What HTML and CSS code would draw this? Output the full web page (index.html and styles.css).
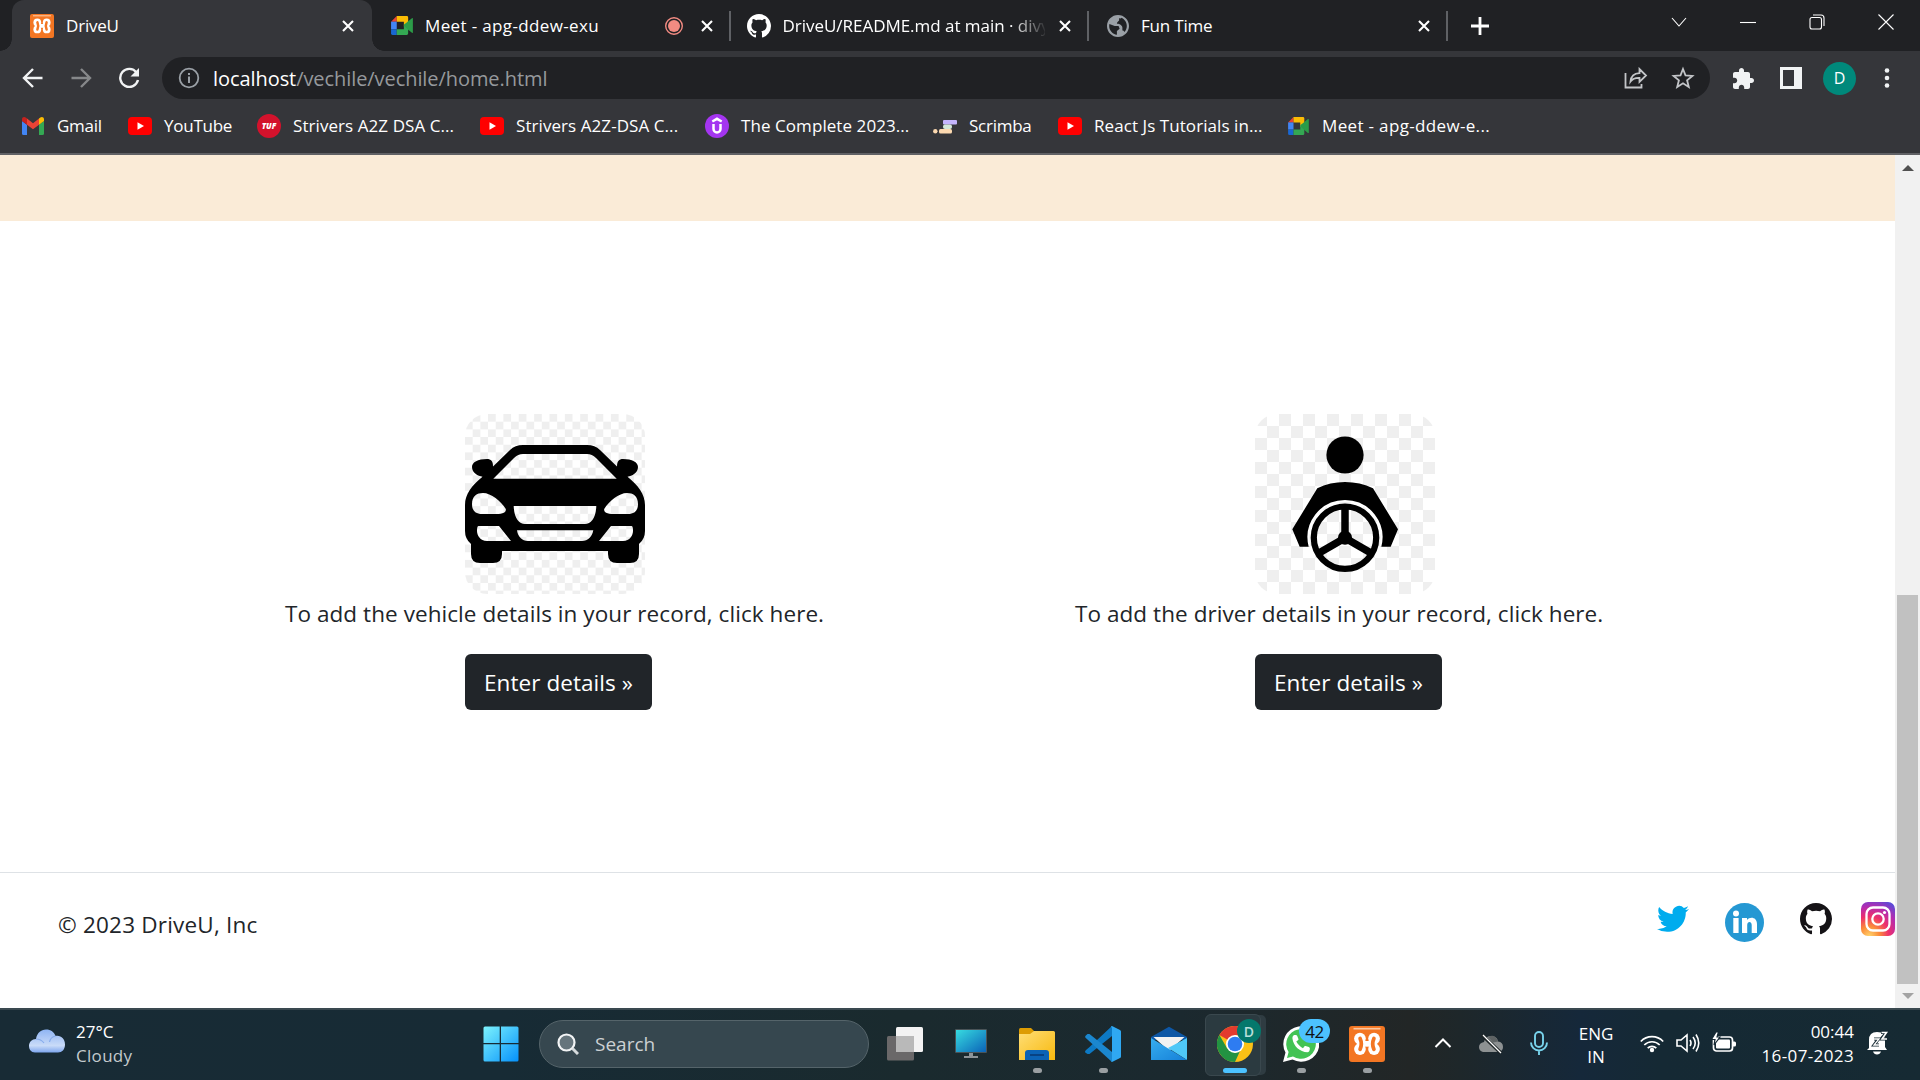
FILE: index.html
```html
<!DOCTYPE html>
<html lang="en">
<head>
<meta charset="utf-8">
<title>DriveU</title>
<link rel="stylesheet" href="styles.css">
</head>
<body>
<svg class="defs" width="0" height="0" aria-hidden="true">
  <defs>
    <linearGradient id="g-win" x1="0" y1="0" x2="1" y2="1"><stop offset="0" stop-color="#7df3fd"/><stop offset="1" stop-color="#0591fb"/></linearGradient>
    <linearGradient id="g-mon" x1="0" y1="0" x2="1" y2="1"><stop offset="0" stop-color="#36dbe0"/><stop offset="1" stop-color="#0b63b8"/></linearGradient>
    <linearGradient id="g-fold" x1="0" y1="0" x2="1" y2="1"><stop offset="0" stop-color="#ffde76"/><stop offset="1" stop-color="#f8b90e"/></linearGradient>
    <linearGradient id="g-cloud" x1="0" y1="0" x2="0" y2="1"><stop offset="0" stop-color="#8fb4f3"/><stop offset=".7" stop-color="#c9dbf8"/><stop offset="1" stop-color="#7ea6ee"/></linearGradient>
    <linearGradient id="g-mail" x1="0" y1="0" x2="1" y2="1"><stop offset="0" stop-color="#37aef0"/><stop offset="1" stop-color="#1580d8"/></linearGradient>
    <radialGradient id="g-ig" cx=".25" cy="1" r="1.15"><stop offset="0" stop-color="#ffd36b"/><stop offset=".25" stop-color="#fb8c3a"/><stop offset=".5" stop-color="#ee2f6b"/><stop offset=".75" stop-color="#b42cb0"/><stop offset="1" stop-color="#5a4bd8"/></radialGradient>
    <pattern id="p-car" width="15.36" height="15.36" patternUnits="userSpaceOnUse"><path fill="#efefef" d="M0 7.68h7.68v7.68H0zM7.68 0h7.68v7.68H7.68z"/></pattern>
    <pattern id="p-drv" width="24" height="24" patternUnits="userSpaceOnUse"><path fill="#efefef" d="M0 0h12v12H0zM12 12h12v12H12z"/></pattern>
  </defs>
  <symbol id="close" viewBox="0 0 16 16"><path d="M3 3l10 10M13 3L3 13" stroke="#fff" stroke-width="2.1" fill="none"/></symbol>
  <symbol id="xampp" viewBox="0 0 24 24"><rect width="24" height="24" rx="2" fill="#f37623"/><path d="M3 1.800h18" stroke="#fbc8a2" stroke-width="1.100"/><g fill="#fff"><circle cx="7.300" cy="8.400" r="3.900"/><circle cx="16.700" cy="8.400" r="3.900"/><circle cx="7.300" cy="15.400" r="3.900"/><circle cx="16.700" cy="15.400" r="3.900"/><path d="M5.200 10h13.600v3.800H5.200z"/></g><path d="M7.400 8.300q1.600 3.600 0 7.200M16.600 8.300q-1.600 3.600 0 7.200" fill="none" stroke="#f37623" stroke-width="2.500" stroke-linecap="round"/></symbol>
  <symbol id="meet" viewBox="0 0 24 20"><path fill="#ea4335" d="M1 6l6-6v6z"/><path fill="#fbbc04" d="M7 0h10.500q1.500 0 1.500 1.500V8l-4.500 3V6H7z"/><path fill="#4285f4" d="M1 6h6v8H1z"/><path fill="#1967d2" d="M1 14h6v6H2.500Q1 20 1 18.500z"/><path fill="#34a853" d="M7 14h7.500V9L19 6v12.500q0 1.500-1.500 1.500H7z"/><path fill="#2c9c48" d="M14.500 10L19 5.500l4-3.200q1-.6 1 .5v14.400q0 1.100-1 .5l-4-3.200z"/></symbol>
  <symbol id="github" viewBox="0 0 16 16"><path fill="currentColor" d="M8 0C3.58 0 0 3.58 0 8c0 3.540 2.290 6.530 5.470 7.590.4.070.55-.17.55-.38 0-.19-.01-.82-.01-1.490-2.010.37-2.530-.49-2.690-.94-.09-.23-.48-.94-.82-1.130-.28-.15-.68-.52-.01-.53.63-.01 1.080.58 1.230.82.72 1.210 1.870.87 2.330.66.070-.52.28-.87.51-1.070-1.780-.2-3.640-.89-3.640-3.950 0-.87.31-1.590.82-2.150-.08-.2-.36-1.020.08-2.120 0 0 .67-.21 2.200.82.64-.18 1.320-.27 2-.27s1.360.09 2 .27c1.530-1.040 2.200-.82 2.200-.82.44 1.100.16 1.920.08 2.120.51.56.82 1.270.82 2.150 0 3.070-1.870 3.750-3.650 3.950.29.25.54.73.54 1.480 0 1.070-.01 1.930-.01 2.200 0 .21.15.46.55.38A8.010 8.010 0 0 0 16 8c0-4.420-3.580-8-8-8z"/></symbol>
  <symbol id="yt" viewBox="0 0 24 18"><rect width="24" height="18" rx="4" fill="#f00"/><path fill="#fff" d="M9.500 5.200v7.600L16 9z"/></symbol>
</svg>

<header class="chrome">
  <div class="tabstrip">
    <div class="tab active"><svg class="ic24"><use href="#xampp"/></svg><span class="title">DriveU</span><svg class="x"><use href="#close"/></svg></div>
    <div class="tab sep"><svg class="meet"><use href="#meet"/></svg><span class="title wide">Meet - apg-ddew-exu</span><svg class="rec" viewBox="0 0 20 20"><circle cx="10" cy="10" r="8.300" fill="none" stroke="#f28b82" stroke-width="1.400"/><circle cx="10" cy="10" r="6" fill="#f28b82"/></svg><svg class="x"><use href="#close"/></svg></div>
    <div class="tab sep gh"><svg class="ic24"><use href="#github"/></svg><span class="title fade">DriveU/README.md at main · divy</span><svg class="x"><use href="#close"/></svg></div>
    <div class="tab sep"><svg class="globe" viewBox="2 2 20 20"><path fill="#9aa0a6" d="M12 2C6.480 2 2 6.480 2 12s4.480 10 10 10 10-4.480 10-10S17.520 2 12 2zm-1 17.930c-3.950-.49-7-3.850-7-7.930 0-.62.08-1.210.21-1.790L9 12h3.500l1 2.500-2.500 2zm6.900-2.540c-.26-.81-1-1.390-1.900-1.390v-2.500c0-1.500-2-3.500-5-3.500 0-1.500 1-2 2-3V5c1 0 2 .6 2-.41 2.930 1.190 5 4.060 5 7.410 0 2.080-.8 3.970-2.100 5.390z"/></svg><span class="title">Fun Time</span><svg class="x"><use href="#close"/></svg></div>
    <svg class="plus" viewBox="0 0 18 18"><path d="M9 0v18M0 9h18" stroke="#fff" stroke-width="2.800"/></svg>
    <div class="winctl">
      <svg viewBox="0 0 16 16"><path d="M1 4l7 8 7-8"/></svg>
      <svg viewBox="0 0 16 16"><path d="M0 8.500h16"/></svg>
      <svg viewBox="0 0 16 16"><rect x="1" y="3.500" width="11.500" height="11.500" rx="2"/><path d="M4 1h8q3 0 3 3v8"/></svg>
      <svg viewBox="0 0 16 16"><path d="M.5.5l15 15M15.500.5l-15 15"/></svg>
    </div>
  </div>
  <div class="toolbar">
    <svg class="nav" viewBox="0 0 22 22"><path d="M20.500 11H3M11 2L2 11l9 9" stroke="#f1f3f4"/></svg>
    <svg class="nav" viewBox="0 0 22 22"><path d="M1.500 11H19M11 2l9 9-9 9" stroke="#86888a"/></svg>
    <svg class="nav" viewBox="0 0 22 22"><path d="M18.500 5.500A9 9 0 1 0 20 13" stroke="#f1f3f4"/><path d="M21 1v8.500h-8.500z" fill="#f1f3f4"/></svg>
    <div class="omni">
      <svg class="info" viewBox="0 0 22 22"><circle cx="11" cy="11" r="9.300" fill="none" stroke="#9aa0a6" stroke-width="1.800"/><path d="M11 9.500V16M11 6v2" stroke="#9aa0a6" stroke-width="2"/></svg>
      <span class="url"><b>localhost</b>/vechile/vechile/home.html</span>
      <svg class="share" viewBox="0 0 24 22"><path d="M1.500 6v14.500h16V17M6.500 14.500c.5-5 3.500-8 9-8.300V2l6.500 6.500-6.500 6.300v-4c-4-.2-7 .9-9 3.700z"/></svg>
      <svg class="star" viewBox="0 0 24 24"><path d="M12 3l2.500 6.400 6.900.5-5.300 4.400 1.700 6.700-5.800-3.700L6.200 21l1.700-6.700L2.600 9.900l6.900-.5z"/></svg>
    </div>
    <svg class="puz" viewBox="1 0 23 23"><path fill="#f1f3f4" d="M20.500 11H19V7c0-1.100-.9-2-2-2h-4V3.500C13 2.120 11.880 1 10.500 1S8 2.120 8 3.500V5H4c-1.100 0-1.990.9-1.990 2v3.800H3.500c1.490 0 2.700 1.210 2.700 2.700s-1.210 2.700-2.700 2.700H2V20c0 1.100.9 2 2 2h3.800v-1.500c0-1.490 1.210-2.700 2.700-2.700 1.490 0 2.700 1.210 2.700 2.700V22H17c1.100 0 2-.9 2-2v-4h1.500c1.380 0 2.500-1.120 2.500-2.500S21.880 11 20.500 11z"/></svg>
    <svg class="panel" viewBox="0 0 22 22"><path fill="#f1f3f4" fill-rule="evenodd" d="M0 0h22v22H0zM3 3v16h11V3z"/></svg>
    <div class="me">D</div>
    <svg class="dots" viewBox="0 0 6 20"><circle cx="3" cy="2.500" r="2.300"/><circle cx="3" cy="10" r="2.300"/><circle cx="3" cy="17.500" r="2.300"/></svg>
  </div>
  <nav class="bookmarks">
    <a><svg viewBox="0 0 24 18"><path fill="#4285f4" d="M1 4l5 3.700V18H2.500Q1 18 1 16.500z"/><path fill="#34a853" d="M18 7.700L23 4v12.500q0 1.500-1.500 1.500H18z"/><path fill="#ea4335" d="M6 1.500l6 4.700 6-4.700v6.200l-6 4.600-6-4.600z"/><path fill="#c5221f" d="M1 4V2.200C1 .2 3.200-.5 4.700.6L6 1.500v6.200z"/><path fill="#fbbc04" d="M18 1.500l1.300-.9C20.800-.5 23 .2 23 2.200V4l-5 3.700z"/></svg><span>Gmail</span></a>
    <a><svg><use href="#yt"/></svg><span>YouTube</span></a>
    <a class="mid"><svg class="round" viewBox="0 0 24 24"><circle cx="12" cy="12" r="12" fill="#d3122c"/><text class="tuf" x="12" y="15" text-anchor="middle">TUF</text></svg><span>Strivers A2Z DSA C...</span></a>
    <a class="mid"><svg><use href="#yt"/></svg><span>Strivers A2Z-DSA C...</span></a>
    <a class="mid"><svg class="round" viewBox="0 0 24 24"><circle cx="12" cy="12" r="12" fill="#a435f0"/><path d="M7.300 7.500L12 4.800l4.700 2.700M8.500 10v5a3.500 3.500 0 0 0 7 0v-5" fill="none" stroke="#fff" stroke-width="2.500"/></svg><span>The Complete 2023...</span></a>
    <a><svg class="round" viewBox="0 0 24 24"><rect x="10" y="6" width="14" height="4.500" rx="1" fill="#c4b5fd"/><rect x="10" y="10.500" width="9" height="4.500" rx="2" fill="#d3e8d8"/><rect x="6" y="15" width="13" height="4.500" rx="1.500" fill="#fcd9b0"/><circle cx="2.300" cy="17.300" r="2.200" fill="#fcd9b0"/></svg><span>Scrimba</span></a>
    <a class="mid"><svg><use href="#yt"/></svg><span>React Js Tutorials in...</span></a>
    <a class="wide"><svg class="meet"><use href="#meet"/></svg><span>Meet - apg-ddew-e...</span></a>
  </nav>
</header>

<div class="viewport">
  <main class="page">
    <div class="band"></div>
    <section class="cards">
      <article class="card">
        <svg class="pic" viewBox="0 0 180 180"><rect width="180" height="180" fill="#fff"/><rect width="180" height="180" fill="url(#p-car)"/>
          <path fill-rule="evenodd" d="M58 31H122Q130 31 135 36L152 52.500C152 47 154 45 158 45C167 45 173 48 173 53C173 59 167 62 162.500 62.700C173 71 180 80 180 91V117Q180 125 174 130V140Q174 149 165 149H152Q143 149 143 140V137H37V140Q37 149 28 149H15Q6 149 6 140V130Q0 125 0 117V91C0 80 7 71 17.500 62.700C13 62 7 59 7 53C7 48 13 45 22 45C26 45 28 47 28 52.500L45 36Q50 31 58 31ZM28.300 64.700H151.700L131 44Q127 40 122 40H58Q53 40 49 44Z
            M7 90C7 82 12 79 18 79C26 79 36 87 40.800 95C41.500 99 36 100 29 100H17C10 100 7 96 7 90ZM13.500 112H34L46 127H22C15 127 12 121 12 117Q12 112 13.500 112Z
            M173 90C173 82 168 79 162 79C154 79 144 87 139.200 95C138.500 99 144 100 151 100H163C170 100 173 96 173 90ZM166.500 112H146L134 127H158C165 127 168 121 168 117Q168 112 166.500 112Z
            M48.700 92H131.300C131 104 126 110 120 110H60C54 110 49 104 48.700 92ZM52 116.300H128.300C127 123 123 127 117 127H63C57 127 53 123 52 116.300Z"/>
        </svg>
        <p>To add the vehicle details in your record, click here.</p>
        <a class="btn">Enter details »</a>
      </article>
      <article class="card">
        <svg class="pic" viewBox="0 0 180 180"><rect width="180" height="180" fill="#fff"/><rect width="180" height="180" fill="url(#p-drv)"/><circle cx="90" cy="41" r="18.600"/>
          <path d="M62.300 74.300Q75 68 90 68T118 74.300L143 115.300 135.700 132.700H125.300A36.500 36.500 0 1 0 54.700 132.700H44.700L37.300 115.300Z"/>
          <path d="M54.700 132.700A36.500 36.500 0 1 1 125.300 132.700" fill="none" stroke="#fff" stroke-width="2"/>
          <circle cx="90" cy="123.700" r="31.200" fill="none" stroke="#000" stroke-width="6.200"/><circle cx="90" cy="123.700" r="7"/><path d="M90 124V94M90 124l-26 15M90 124l26 15" stroke="#000" stroke-width="7.500"/></svg>
        <p>To add the driver details in your record, click here.</p>
        <a class="btn">Enter details »</a>
      </article>
    </section>
    <footer class="foot">
      <span class="copy">© 2023 DriveU, Inc</span>
      <svg class="tw" viewBox="0 2 24 20.200"><path fill="#00acee" d="M23.953 4.570a10 10 0 01-2.825.775 4.958 4.958 0 002.163-2.723c-.951.555-2.005.959-3.127 1.184a4.920 4.920 0 00-8.384 4.482C7.690 8.095 4.067 6.130 1.640 3.162a4.822 4.822 0 00-.666 2.475c0 1.710.87 3.213 2.188 4.096a4.904 4.904 0 01-2.228-.616v.06a4.923 4.923 0 003.946 4.827 4.996 4.996 0 01-2.212.085 4.936 4.936 0 004.604 3.417 9.867 9.867 0 01-6.102 2.105c-.39 0-.779-.023-1.170-.067a13.995 13.995 0 007.557 2.209c9.053 0 13.998-7.496 13.998-13.985 0-.21 0-.42-.015-.63A9.935 9.935 0 0024 4.590z"/></svg>
      <svg class="li" viewBox="0 0 39 39"><circle cx="19.500" cy="19.500" r="19.500" fill="#2598d3"/><circle cx="11" cy="10.500" r="3" fill="#fff"/><path fill="#fff" d="M8.300 15h5.300v15H8.300zM17 15h5v2c3-4 10-3 10 4v9h-5.300v-8c0-4-4.500-4-4.500 0v8H17z"/></svg>
      <svg class="git"><use href="#github"/></svg>
      <svg class="ig" viewBox="0 0 34 34"><rect width="34" height="34" rx="7" fill="url(#g-ig)"/><g fill="none" stroke="#fff" stroke-width="2.300"><rect x="5.500" y="5.500" width="23" height="23" rx="6.500"/><circle cx="17" cy="17" r="5.700"/></g><circle cx="23.500" cy="10.500" r="1.600" fill="#fff"/></svg>
    </footer>
  </main>
  <div class="scroll"><i class="up"></i><i class="thumb"></i><i class="down"></i></div>
</div>

<div class="taskbar">
  <div class="weather">
    <svg viewBox="0 0 36 24"><path fill="url(#g-cloud)" d="M6 23.500C2 23.500 0 20.500 0 17c0-4 3-7 7-7C8 4 12 .5 17 .5S25 3 26.500 7C32 6 36 10 36 15.500c0 5-3 8-7 8z"/><path d="M7 10q5 0 8 4M26.500 7q-5 1-6 6" fill="none" stroke="#86abec" stroke-width="1.200"/></svg>
    <div class="two"><span>27°C</span><span class="dim">Cloudy</span></div>
  </div>
  <div class="apps">
    <svg class="app" viewBox="0 0 36 36"><path fill="url(#g-win)" d="M2 .5h14.700v16.500H.5V2q0-1.500 1.500-1.500zM18 .5h16q1.500 0 1.500 1.500v15H18zM.5 18.300h16.200v17.200H2q-1.500 0-1.500-1.500zM18 18.300h17.500V34q0 1.500-1.500 1.500H18z"/></svg>
    <div class="search"><svg viewBox="0 0 22 22"><circle cx="9.500" cy="9.500" r="8" fill="#66757c" stroke="#f2f4f5" stroke-width="2.200"/><path d="M15.500 15.500l5.500 5.500" stroke="#d5dadc" stroke-width="3"/></svg><span>Search</span></div>
    <svg class="app" viewBox="0 0 36 36"><rect x="9" y="1" width="27" height="25" rx="1.500" fill="#f3f3f3"/><rect x="0" y="10" width="27" height="24.500" rx="1.500" fill="#6a6869"/><path fill="#b9b9b9" d="M9 10h18v16H9z"/></svg>
    <svg class="app" viewBox="0 0 36 36"><path fill="#8d9498" d="M16 26h4v4h5v2H11v-2h5z"/><rect x="2" y="3" width="32" height="24" rx="1" fill="#4a5458"/><rect x="3" y="4" width="30" height="22" fill="url(#g-mon)"/></svg>
    <div class="slot"><svg class="app" viewBox="0 0 36 36"><path fill="#dd9c03" d="M0 3.500Q0 2 1.500 2H12l3 3v6H0z"/><path fill="url(#g-fold)" d="M0 8h11l4-3h19.500Q36 5 36 6.500V34H0z"/><path fill="#0b63b5" d="M6 34v-7q0-3 3-3h18q3 0 3 3v7z"/><path d="M11 29h14" stroke="#083f7c" stroke-width="1.800"/></svg><i></i></div>
    <div class="slot"><svg class="app" viewBox="0 0 36 36"><path fill="#0d79c4" d="M27 0L4 21.500 1 24q-2 2 0 3l1.500 1h2L27 10z"/><path fill="#1b87cf" d="M27 36L.8 12q-1.300-1.300 0-2.600L2.500 8h2L27 26z"/><path fill="#2fa8f2" d="M26 .5q1-1 2 0l7 3.500q1 .5 1 1.500v25q0 1-1 1.500l-7 3.500q-1 .8-2 0 1 0 1-1.500V2z"/></svg><i></i></div>
    <svg class="app" viewBox="0 0 36 36"><path fill="#0d57a6" d="M0 11L18 .8 36 11v3H0z"/><path fill="#f2f2f2" d="M2.500 11h31L18 25z"/><path fill="#4fc8f7" d="M36 12v22L17 22z"/><path fill="url(#g-mail)" d="M0 12l36 22H0z"/></svg>
    <div class="slot on"><svg class="app" viewBox="0 0 36 36"><circle cx="18" cy="18" r="18" fill="#fbc116"/><path fill="#e33b2e" d="M18 18L2.400 9A18 18 0 0 1 33.600 9H18z"/><path fill="#229342" d="M18 36A18 18 0 0 1 2.400 9l7.800 13.500 7.800 4.500 5-2z"/><circle cx="18" cy="18" r="9" fill="#fff"/><circle cx="18" cy="18" r="7.300" fill="#2e7cf1"/></svg><b class="badge d">D</b><i></i></div>
    <div class="slot"><svg class="app" viewBox="0 0 36 36"><path fill="#fff" d="M0 36l2.500-9.500A18 17.800 0 1 1 9.500 33.500z"/><path fill="#43c354" d="M4 32l1.600-6A14.800 14.800 0 1 1 10 30.400z"/><path fill="#fff" transform="translate(6.500 6) scale(.97)" d="M20 15.400l-3.500-1c-.5 0-.8 0-1 .3l-1.600 2c-2.800-1.400-5.500-3.900-6.900-6.800L9 8.200c.3-.3.300-.7.200-1L8 4Q7.500 3 6.500 3H5C3.500 3.500 3 5 3 6.500 4 15 10.700 20.500 18.500 21c1.500-.2 2.500-1.500 2.500-4q0-1-1-1.600z"/></svg><b class="badge n">42</b><i></i></div>
    <div class="slot"><svg class="app"><use href="#xampp"/></svg><i></i></div>
  </div>
  <div class="tray">
    <svg class="up" viewBox="0 0 18 10"><path d="M1.500 9L9 1.500 16.500 9" fill="none" stroke="#fff" stroke-width="2"/></svg>
    <svg class="od" viewBox="0 0 24 20"><path fill="#8d9192" d="M4 18q-4-1-4-5t5-5q1-6 7-6t7 5.500q5 .5 5 5.500 0 4-4 5z"/><path fill="#5e6364" d="M9 3q7-4 10 4.500l-5 1z"/><path d="M3 1l19 18" stroke="#1d2426" stroke-width="3.500"/><path d="M4 1l18 18" stroke="#fff" stroke-width="1.300"/></svg>
    <svg class="mic" viewBox="0 0 18 24"><g fill="none" stroke="#78d3ec" stroke-width="1.900"><rect x="5" y="1" width="8" height="15" rx="4"/><path d="M1 11.500a8 8 0 0 0 16 0M9 19.500V24"/></g></svg>
    <div class="two lang"><span>ENG</span><span>IN</span></div>
    <svg class="s24" viewBox="0 0 24 24"><g fill="none" stroke="#fff" stroke-width="1.700"><path d="M.8 10.500a15.500 15.500 0 0 1 22.400 0M4.300 14a10.700 10.700 0 0 1 15.400 0M7.700 17.200a6 6 0 0 1 8.600 0"/></g><circle cx="12" cy="19" r="2.200" fill="#fff"/></svg>
    <svg class="s24" viewBox="0 0 24 24"><g fill="none" stroke="#fff" stroke-width="1.600"><path d="M1 9h4l6-5v16l-6-5H1zM14 9q2 3 0 6M17 6q4.500 6 0 12M20 3.500q5.500 8.500 0 17"/></g></svg>
    <svg class="s24" viewBox="0 0 24 24"><rect x="1.500" y="6" width="19" height="14" rx="3" fill="none" stroke="#fff" stroke-width="1.700"/><rect x="4" y="8.500" width="14" height="9" rx="1" fill="#fff"/><path fill="#fff" d="M21 10.500h1.500q1.500 0 1.500 1.500v2q0 1.500-1.500 1.500H21z"/><path fill="#fff" stroke="#152833" stroke-width="1.200" d="M4 1L-.5 8.500H3L2 14l6-8H5L6.500 1z"/></svg>
    <div class="two clock"><span>00:44</span><span class="date">16-07-2023</span></div>
    <svg class="bell" viewBox="0 0 22 24"><path fill="#fff" d="M2 17V9q0-8 8-8 9 0 8 8v7l2 3H0zM6 20.500h8q-1 3-4 3t-4-3z"/><path d="M7 8h4.500L7 14h5M14 1.500h5.500L14 8h6" fill="none" stroke="#162a33" stroke-width="3"/><path d="M7 8h5L7 14h5" fill="none" stroke="#fff" stroke-width="1.300"/><path d="M14.500 1.500h5L15 8h5" fill="none" stroke="#fff" stroke-width="1.600"/></svg>
  </div>
</div>
</body>
</html>
```
FILE: styles.css
```css
* { box-sizing: border-box; }
body { margin: 0; width: 1920px; height: 1080px; overflow: hidden; display: flex; flex-direction: column; font-family: "Open Sans", "Noto Sans", sans-serif; background: #fff; }
svg { display: block; flex: none; }
.defs { position: absolute; }

/* browser frame */
.chrome { height: 155px; background: #35363a; border-bottom: 2px solid #606165; color: #fff; font-size: 17px; }
.tabstrip { height: 51px; background: #202124; display: flex; align-items: center; padding-left: 12px; }
.tab { width: 358.5px; height: 51px; padding: 0 16px 0 18px; display: flex; align-items: center; gap: 12px; position: relative; }
.tab.active { width: 360px; background: #35363a; border-radius: 12px 12px 0 0; }
.tab.active::before, .tab.active::after { content: ""; position: absolute; bottom: 0; width: 12px; height: 12px; }
.tab.active::before { left: -12px; background: radial-gradient(circle at 0 0, transparent 11.5px, #35363a 12px); }
.tab.active::after { right: -12px; background: radial-gradient(circle at 100% 0, transparent 11.5px, #35363a 12px); }
.tab.sep { background: linear-gradient(#5f6165, #5f6165) right center / 2px 30px no-repeat; }
.tab.gh { padding-left: 16px; }
.title { flex: 1; min-width: 0; white-space: nowrap; letter-spacing: -0.2px; }
.title.wide { letter-spacing: 0.36px; }
.title.fade { letter-spacing: -0.03px; -webkit-mask-image: linear-gradient(90deg, #000 87%, transparent 101%); mask-image: linear-gradient(90deg, #000 87%, transparent 101%); }
.ic24 { width: 24px; height: 24px; }
.meet { width: 23px; height: 19px; }
.globe { width: 22px; height: 22px; }
.rec { width: 20px; height: 20px; margin-right: 3px; }
.x { width: 16px; height: 16px; }
.plus { width: 18px; height: 18px; margin-left: 23px; }
.winctl { display: flex; gap: 53px; margin: 0 26px 7px auto; }
.winctl svg { width: 16px; height: 16px; fill: none; stroke: #fff; stroke-width: 1.1; }
.toolbar { height: 54px; display: flex; align-items: center; padding-left: 22px; }
.nav { width: 22px; height: 22px; margin-right: 26px; fill: none; stroke-width: 2.4; }
.nav + .nav + .nav { margin-right: 22px; }
.omni { width: 1548px; height: 42px; border-radius: 21px; background: #202124; display: flex; align-items: center; padding: 0 15px 0 16px; }
.info { width: 22px; height: 22px; margin-right: 13px; }
.url { flex: 1; font-size: 20px; color: #96999c; letter-spacing: -0.07px; }
.url b { font-weight: 400; color: #fff; }
.share { width: 24px; height: 22px; margin-right: 23px; }
.share path, .star path { fill: none; stroke: #c3c5c8; stroke-width: 1.8; }
.star { width: 24px; height: 24px; }
.puz { width: 23px; height: 23px; margin-left: 22px; }
.panel { width: 22px; height: 22px; margin-left: 25px; }
.me { width: 33px; height: 33px; border-radius: 50%; background: #00897b; margin-left: 21px; display: grid; place-items: center; font-size: 16px; }
.dots { width: 6px; height: 20px; margin-left: 28px; fill: #f1f3f4; }
.bookmarks { display: grid; grid-template-columns: 107px 129px 223px 225px 228px 125px 228px 1fr; padding-left: 21px; height: 42px; align-items: center; }
.bookmarks a { display: flex; align-items: center; gap: 12px; white-space: nowrap; letter-spacing: -0.25px; }
.bookmarks a.mid { letter-spacing: 0.07px; }
.bookmarks a.wide { letter-spacing: 0.34px; }
.bookmarks svg { width: 24px; height: 18px; }
.bookmarks svg.round { height: 24px; }
.bookmarks span { margin-top: -2px; }
.tuf { font: italic 800 8px "Open Sans", sans-serif; fill: #fff; letter-spacing: 0; }

/* web page */
.viewport { height: 853px; display: flex; }
.page { width: 1895px; display: flex; flex-direction: column; color: #212529; font-size: 22.5px; letter-spacing: 0.065px; }
.band { height: 66px; background: #faebd7; }
.cards { height: 651px; display: flex; padding: 193px 0 0 285px; gap: 251px; }
.card { width: 539px; }
.pic { width: 180px; height: 180px; border-radius: 22px; margin-left: 180px; }
.card p { margin: 0; height: 60px; line-height: 40px; white-space: nowrap; }
.btn { display: flex; align-items: center; justify-content: center; width: 187px; height: 56px; padding-top: 1px; margin-left: 180px; background: #212529; color: #fff; border-radius: 6px; white-space: nowrap; }
.foot { height: 136px; border-top: 1px solid #dee2e6; display: flex; align-items: flex-start; padding: 29px 0 0 58px; }
.copy { flex: 1; line-height: 46px; letter-spacing: 0.2px; }
.tw { width: 32px; height: 28px; margin: 3px 36px 0 0; }
.li { width: 39px; height: 39px; margin: 1px 36px 0 0; }
.git { width: 32px; height: 32px; margin: 1px 29px 0 0; color: #151316; }
.ig { width: 34px; height: 34px; }
.scroll { width: 25px; background: #f1f1f1; display: flex; flex-direction: column; align-items: center; }
.scroll .up { border: 6px solid transparent; border-top: 0; border-bottom: 6px solid #505050; margin-top: 10px; }
.scroll .thumb { width: 21px; height: 389px; background: #c1c1c1; margin-top: 424px; }
.scroll .down { border: 6px solid transparent; border-bottom: 0; border-top: 6px solid #a3a3a3; margin-top: 9px; }

/* desktop taskbar */
.taskbar { height: 72px; border-top: 2px solid #3a4950; background: linear-gradient(90deg, #182b35 0, #172b35 500px, #1a2a2e 900px, #1b292f 1180px, #222626 1410px, #1e272a 1460px, #15283a 1580px, #152934 1660px, #162a33); color: #fff; display: flex; font-size: 17px; }
.weather { width: 483px; display: flex; padding: 19px 0 0 29px; gap: 11px; }
.two { display: flex; flex-direction: column; line-height: 24px; margin-top: -9px; }
.weather svg { width: 36px; height: 24px; }
.dim { color: #c3cacd; letter-spacing: 0.3px; }
.apps { display: flex; gap: 30px; padding-top: 16px; width: 902px; }
.app { width: 36px; height: 36px; }
.search { width: 330px; height: 48px; margin: -6px -12px 0 -10px; border-radius: 24px; background: #36474f; border: 1.5px solid #55646a; display: flex; align-items: center; padding-left: 17px; gap: 16px; font-size: 19px; color: #ccd1d3; }
.search svg { width: 22px; height: 22px; }
.slot { width: 36px; position: relative; }
.slot i { position: absolute; left: 14px; top: 42px; width: 9px; height: 5px; border-radius: 3px; background: #9a9fa2; }
.slot.on i { left: 6px; width: 24px; background: #4cc2ff; }
.slot.on::before { content: ""; position: absolute; left: -12px; top: -12px; width: 54px; height: 60px; border-radius: 6px; background: #2b3a40; border: 1px solid #3a484e; box-shadow: 6px 0 0 -1px #2f3c42; }
.slot.on .app { position: relative; }
.badge { position: absolute; font-weight: 400; display: grid; place-items: center; }
.badge.d { left: 20px; top: -7px; width: 24px; height: 24px; border-radius: 50%; background: #04786c; color: #b9dfdb; font-size: 14px; font-weight: 600; }
.badge.n { left: 16px; top: -7px; width: 31px; height: 24px; border-radius: 12px; background: #4cc2ff; color: #111; font-size: 17px; letter-spacing: -0.5px; }
.tray { display: flex; align-items: flex-start; flex: 1; padding-left: 49px; }
.tray svg { margin-top: 21px; }
.tray .up { width: 18px; height: 10px; margin: 28px 27px 0 0; }
.tray .od { width: 24px; height: 20px; margin: 24px 27px 0 0; }
.tray .mic { width: 18px; height: 24px; margin-right: 30px; }
.lang { width: 36px; margin: 12px 26px 0 0; line-height: 23px; align-items: center; }
.s24 { width: 24px; height: 24px; margin-right: 12px; }
.clock { width: 106px; margin: 10px 13px 0 0; align-items: flex-end; }
.date { letter-spacing: 0.38px; }
.tray .bell { width: 22px; height: 24px; }
```
